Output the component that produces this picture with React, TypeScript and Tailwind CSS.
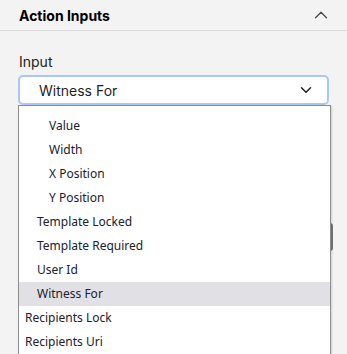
import { ChevronDown, ChevronUp } from 'lucide-react'

const options = [
  { label: 'Value', level: 2 },
  { label: 'Width', level: 2 },
  { label: 'X Position', level: 2 },
  { label: 'Y Position', level: 2 },
  { label: 'Template Locked', level: 1 },
  { label: 'Template Required', level: 1 },
  { label: 'User Id', level: 1 },
  { label: 'Witness For', level: 1, selected: true },
  { label: 'Recipients Lock', level: 0 },
  { label: 'Recipients Uri', level: 0 },
]

const indent = ['pl-[6px]', 'pl-[18px]', 'pl-[30px]']

export default function App() {
  return (
    <div className="relative h-[354px] w-[347px] overflow-hidden bg-[#f3f3f3] font-['Inter',sans-serif] text-[#1b1b1b]">
      <div className="flex h-[31px] items-center justify-between border-b border-[#dcdcdc] pl-[19px] pr-[15px]">
        <span className="text-[14px] font-bold text-black">Action Inputs</span>
        <ChevronUp className="h-[22px] w-[22px] text-[#444]" strokeWidth={1.3} />
      </div>

      <div className="relative px-[18px] pt-[21px]">
        <label className="block pl-px text-[14px] leading-[20px] text-[#222]">Input</label>
        <div className="mt-[3px] flex h-[30px] items-center justify-between rounded-[5px] border-2 border-[#a8c8f8] bg-white pl-[19px] pr-[12px]">
          <span className="text-[14px] text-[#1f1f1f]">Witness For</span>
          <ChevronDown className="h-[18px] w-[18px] text-[#222]" strokeWidth={2} />
        </div>

        {/* field behind the open menu */}
        <div className="mt-[118px] h-[28px] w-[315px] rounded-[3px] border border-r-2 border-[#777] bg-white" />

        <div className="absolute left-[18px] top-[74px] w-[313px] border border-[#8e8e8e] bg-white pt-[8px] font-['Noto_Sans',sans-serif] shadow-[1px_1px_2px_rgba(0,0,0,0.15)]">
          {options.map((o) => (
            <div
              key={o.label}
              className={`flex h-[24px] items-center text-[12px] text-[#20202e] ${indent[o.level]} ${o.selected ? 'bg-[#e1e0e5]' : ''}`}
            >
              {o.label}
            </div>
          ))}
        </div>
      </div>
    </div>
  )
}
